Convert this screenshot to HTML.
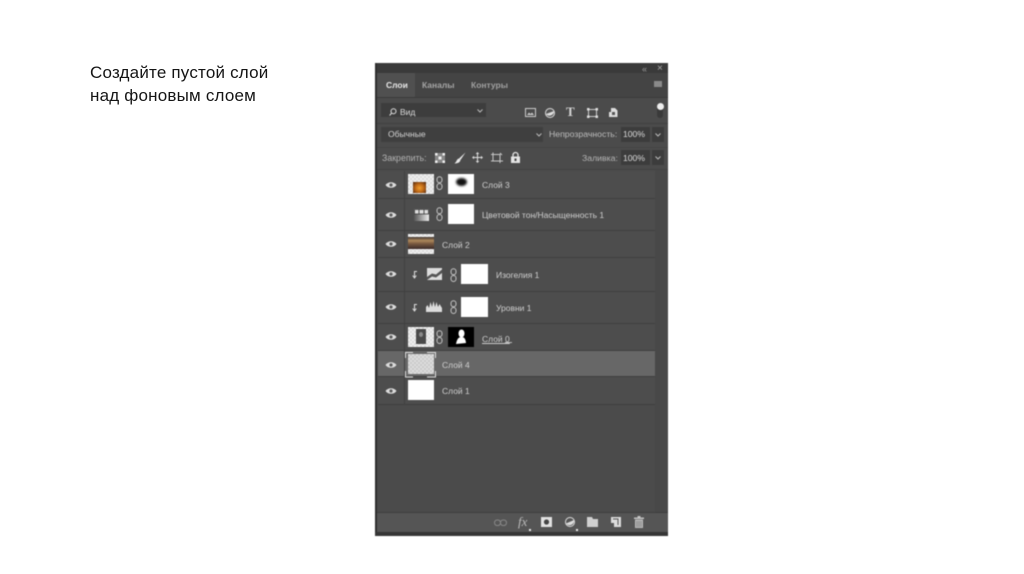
<!DOCTYPE html>
<html><head><meta charset="utf-8">
<style>
html,body{margin:0;padding:0;background:#fff;width:1024px;height:574px;overflow:hidden}
body{position:relative;font-family:"Liberation Sans","Noto Sans CJK SC",sans-serif}
.h{position:absolute;left:90px;font-size:17px;color:#151515;line-height:22px;white-space:nowrap;letter-spacing:.2px;font-family:"Liberation Sans",sans-serif}
#p{position:absolute;left:375px;top:63px;width:293px;height:473px;background:#4b4b4b;overflow:hidden;filter:blur(.45px)}
.a{position:absolute}
.t{position:absolute;white-space:nowrap;font-size:8.5px;color:#cfcfcf;line-height:12px}
.row{position:absolute;left:3px;width:277px;background:#4d4d4d;border-bottom:1px solid #3f3f3f;box-sizing:border-box}
.w{position:absolute;background:#fff}
.c{background-color:#eee;background-image:repeating-conic-gradient(#dcdcdc 0 25%,#f2f2f2 0 50%);background-size:4px 4px}
svg{position:absolute;overflow:visible}
</style></head><body>
<div class="h" style="top:62px">Создайте пустой слой</div>
<div class="h" style="top:85px">над фоновым слоем</div>
<div id="p">
<div class="a" style="left:0;top:0;width:293px;height:10px;background:#3a3a3a"></div>
<div class="a" style="left:0;top:10px;width:293px;height:24px;background:#444"></div>
<div class="a" style="left:0;top:0;width:2px;height:473px;background:#2e2e2e"></div>
<div class="a" style="left:2px;top:10px;width:38px;height:24px;background:#505050"></div>
<div class="t" style="left:11px;top:16px;font-weight:bold;color:#e8e8e8">Слои</div>
<div class="t" style="left:47px;top:16px;font-weight:bold;color:#a5a5a5">Каналы</div>
<div class="t" style="left:96px;top:16px;font-weight:bold;color:#a0a0a0">Контуры</div>
<div class="t" style="left:267px;top:0;color:#999;font-size:9px">«</div>
<div class="t" style="left:282px;top:0;color:#aaa;font-size:10px">×</div>
<div class="a" style="left:279px;top:18px;width:8px;height:6px;background:#8a8a8a"></div>

<div class="a" style="left:2px;top:34px;width:291px;height:1px;background:#3a3a3a"></div>
<div class="a" style="left:6px;top:40px;width:105px;height:14px;background:#3d3d3d"></div>
<svg style="left:14px;top:45px" width="8" height="8"><circle cx="4.5" cy="3.2" r="2.5" fill="none" stroke="#ddd"/><path d="M2.7 5 L.6 7.5" stroke="#ddd"/></svg>
<div class="t" style="left:25px;top:43px;color:#ddd">Вид</div>
<svg style="left:102px;top:46px" width="6" height="4"><path d="M.5 .5L3 3L5.5 .5" fill="none" stroke="#bbb"/></svg>
<svg style="left:150px;top:45px" width="11" height="10"><rect x=".5" y=".5" width="10" height="8" fill="none" stroke="#ccc"/><path d="M2 7L4 4.5L5.5 6L7 4.5L9 7Z" fill="#ccc"/></svg>
<svg style="left:170px;top:45px" width="10" height="10"><circle cx="5" cy="5" r="4.5" fill="#555" stroke="#ddd"/><path d="M1 6A4.5 4.5 0 0 0 9 3Z" fill="#ddd"/></svg>
<div class="t" style="left:191px;top:43px;font-family:'Liberation Serif',serif;font-weight:bold;font-size:13px;color:#d4d4d4">T</div>
<svg style="left:212px;top:45px" width="11" height="10"><rect x="1.5" y="1.5" width="8" height="7" fill="none" stroke="#ccc"/><g fill="#ddd"><rect width="2.5" height="2.5"/><rect x="8.5" width="2.5" height="2.5"/><rect y="7.5" width="2.5" height="2.5"/><rect x="8.5" y="7.5" width="2.5" height="2.5"/></g></svg>
<svg style="left:234px;top:44px" width="9" height="11"><path d="M2 1H6L8.5 3.5V10H0V5H2Z" fill="#ddd"/><rect x="3" y="5" width="3" height="3" fill="#555"/></svg>
<div class="a" style="left:282px;top:42px;width:6px;height:13px;background:#3a3a3a;border-radius:3px"></div>
<div class="a" style="left:282px;top:40px;width:7px;height:7px;background:#eee;border-radius:50%"></div>

<div class="a" style="left:2px;top:60px;width:291px;height:1px;background:#404040"></div>
<div class="a" style="left:6px;top:64px;width:162px;height:15px;background:#3f3f3f"></div>
<div class="t" style="left:13px;top:65px;color:#d4d4d4">Обычные</div>
<svg style="left:161px;top:70px" width="6" height="4"><path d="M.5 .5L3 3L5.5 .5" fill="none" stroke="#bbb"/></svg>
<div class="t" style="left:174px;top:65px;color:#bcbcbc;font-size:8.7px">Непрозрачность:</div>
<div class="a" style="left:246px;top:64px;width:29px;height:15px;background:#3c3c3c"></div>
<div class="t" style="left:248px;top:65px;color:#dcdcdc;font-size:8.6px">100%</div>
<div class="a" style="left:277px;top:64px;width:12px;height:15px;background:#3c3c3c"></div>
<svg style="left:280px;top:70px" width="6" height="4"><path d="M.5 .5L3 3L5.5 .5" fill="none" stroke="#bbb"/></svg>

<div class="a" style="left:2px;top:84px;width:291px;height:1px;background:#444"></div>
<div class="t" style="left:7px;top:89px;color:#b2b2b2;font-size:8.8px">Закрепить:</div>
<svg style="left:60px;top:90px" width="10" height="10"><rect width="10" height="10" fill="#888"/><g fill="#f0f0f0"><rect x="0" y="0" width="2.5" height="2.5"/><rect x="7.5" y="0" width="2.5" height="2.5"/><rect x="3.5" y="3.5" width="3" height="3"/><rect x="0" y="7.5" width="2.5" height="2.5"/><rect x="7.5" y="7.5" width="2.5" height="2.5"/></g></svg>
<svg style="left:79px;top:89px" width="12" height="12"><path d="M11.5 .5L5 6.5L6.5 8Z" fill="#e8e8e8"/><path d="M5 6.5C2.5 7 3 9.5 .5 11.5C3.5 11.5 6 10.5 6.5 8Z" fill="#e8e8e8"/></svg>
<svg style="left:97px;top:89px" width="11" height="11"><path d="M5.5 .5V10.5M.5 5.5H10.5" stroke="#ddd"/><path d="M5.5 0L3.7 2H7.3ZM5.5 11L3.7 9H7.3ZM0 5.5L2 3.7V7.3ZM11 5.5L9 3.7V7.3Z" fill="#ddd"/></svg>
<svg style="left:116px;top:89px" width="12" height="11"><path d="M2 2.5H9V9H2ZM0 2.5H2M2 .5V2.5M0 9H12M9 9V11" fill="none" stroke="#c8c8c8"/><path d="M9 1L11 3" stroke="#c8c8c8"/></svg>
<svg style="left:136px;top:89px" width="9" height="11"><rect y="4.5" width="9" height="6.5" fill="#e4e4e4"/><path d="M2 5V3A2.5 2.5 0 0 1 7 3V5" fill="none" stroke="#e4e4e4" stroke-width="1.3"/><rect x="3.5" y="6.5" width="2" height="2.5" fill="#444"/></svg>
<div class="t" style="left:207px;top:89px;color:#b5b5b5;font-size:8.7px">Заливка:</div>
<div class="a" style="left:246px;top:87px;width:29px;height:15px;background:#3c3c3c"></div>
<div class="t" style="left:248px;top:89px;color:#dcdcdc;font-size:8.6px">100%</div>
<div class="a" style="left:277px;top:87px;width:12px;height:15px;background:#3c3c3c"></div>
<svg style="left:280px;top:93px" width="6" height="4"><path d="M.5 .5L3 3L5.5 .5" fill="none" stroke="#bbb"/></svg>
<div class="a" style="left:2px;top:106px;width:291px;height:1px;background:#434343"></div>

<div class="a" style="left:280px;top:107px;width:13px;height:342px;background:#484848"></div>

<div class="row" style="top:108px;height:28px"></div>
<div class="row" style="top:136px;height:32px"></div>
<div class="row" style="top:168px;height:27px"></div>
<div class="row" style="top:195px;height:34px"></div>
<div class="row" style="top:229px;height:32px"></div>
<div class="row" style="top:261px;height:27px"></div>
<div class="row" style="top:288px;height:26px;background:#676767"></div>
<div class="row" style="top:314px;height:28px"></div>
<div class="a" style="left:29px;top:108px;width:1px;height:234px;background:#414141"></div>

<svg style="left:10px;top:118px" width="12" height="8"><path d="M.5 4C3 .3 9 .3 11.5 4C9 7.7 3 7.7 .5 4Z" fill="#dcdcdc"/><circle cx="6" cy="4" r="1.6" fill="#5a5a5a"/></svg>
<svg style="left:10px;top:148px" width="12" height="8"><path d="M.5 4C3 .3 9 .3 11.5 4C9 7.7 3 7.7 .5 4Z" fill="#dcdcdc"/><circle cx="6" cy="4" r="1.6" fill="#5a5a5a"/></svg>
<svg style="left:10px;top:177px" width="12" height="8"><path d="M.5 4C3 .3 9 .3 11.5 4C9 7.7 3 7.7 .5 4Z" fill="#dcdcdc"/><circle cx="6" cy="4" r="1.6" fill="#5a5a5a"/></svg>
<svg style="left:10px;top:207px" width="12" height="8"><path d="M.5 4C3 .3 9 .3 11.5 4C9 7.7 3 7.7 .5 4Z" fill="#dcdcdc"/><circle cx="6" cy="4" r="1.6" fill="#5a5a5a"/></svg>
<svg style="left:10px;top:240px" width="12" height="8"><path d="M.5 4C3 .3 9 .3 11.5 4C9 7.7 3 7.7 .5 4Z" fill="#dcdcdc"/><circle cx="6" cy="4" r="1.6" fill="#5a5a5a"/></svg>
<svg style="left:10px;top:270px" width="12" height="8"><path d="M.5 4C3 .3 9 .3 11.5 4C9 7.7 3 7.7 .5 4Z" fill="#dcdcdc"/><circle cx="6" cy="4" r="1.6" fill="#5a5a5a"/></svg>
<svg style="left:10px;top:298px" width="12" height="8"><path d="M.5 4C3 .3 9 .3 11.5 4C9 7.7 3 7.7 .5 4Z" fill="#dcdcdc"/><circle cx="6" cy="4" r="1.6" fill="#5a5a5a"/></svg>
<svg style="left:10px;top:324px" width="12" height="8"><path d="M.5 4C3 .3 9 .3 11.5 4C9 7.7 3 7.7 .5 4Z" fill="#dcdcdc"/><circle cx="6" cy="4" r="1.6" fill="#5a5a5a"/></svg>

<!-- row 1 -->
<div class="a c" style="left:33px;top:111px;width:26px;height:20px"></div>
<div class="a" style="left:38px;top:119px;width:13px;height:11px;background:radial-gradient(ellipse at 50% 55%,#f0a030 0,#c06a18 45%,#4a2410 100%)"></div>
<svg style="left:61px;top:113px" width="8" height="15"><rect x="1" y=".7" width="5" height="6" rx="2.5" fill="none" stroke="#c4c4c4"/><rect x="1" y="7.5" width="5" height="6" rx="2.5" fill="none" stroke="#c4c4c4"/></svg>
<div class="w" style="left:73px;top:111px;width:26px;height:20px"></div>
<div class="a" style="left:81px;top:115px;width:11px;height:8px;background:#111;border-radius:50%;filter:blur(1px)"></div>
<div class="t" style="left:107px;top:116px">Слой 3</div>
<!-- row 2 -->
<svg style="left:39px;top:146px" width="15" height="12"><defs><linearGradient id="g" x1="0" x2="1"><stop offset="0" stop-color="#555"/><stop offset="1" stop-color="#eee"/></linearGradient></defs><rect width="15" height="5" fill="#ddd"/><rect y="5" width="15" height="7" fill="url(#g)"/><path d="M.5 .5H5V5H.5ZM5 .5H10V5H5ZM10 .5H14.5V5H10Z" fill="none" stroke="#333" stroke-width=".8"/></svg>
<svg style="left:61px;top:144px" width="8" height="15"><rect x="1" y=".7" width="5" height="6" rx="2.5" fill="none" stroke="#c4c4c4"/><rect x="1" y="7.5" width="5" height="6" rx="2.5" fill="none" stroke="#c4c4c4"/></svg>
<div class="w" style="left:73px;top:141px;width:26px;height:20px"></div>
<div class="t" style="left:107px;top:146px">Цветовой тон/Насыщенность 1</div>
<!-- row 3 -->
<div class="a c" style="left:33px;top:171px;width:26px;height:20px"></div>
<div class="a" style="left:33px;top:174px;width:26px;height:12px;background:linear-gradient(#3d3330,#b08a5c 30%,#7a5a40 55%,#3a2a28)"></div>
<div class="t" style="left:67px;top:176px">Слой 2</div>
<!-- row 4 -->
<svg style="left:37px;top:207px" width="6" height="9"><path d="M5 1.5H2.5V7M.7 5.5L2.5 8L4.3 5.5" fill="none" stroke="#ddd"/></svg>
<svg style="left:52px;top:205px" width="15" height="12"><rect width="15" height="12" fill="#ddd"/><path d="M0 9L5 5.5L9 6.5L15 1.5V5L9 9.5L5 8.5L0 12Z" fill="#555"/></svg>
<svg style="left:75px;top:205px" width="8" height="15"><rect x="1" y=".7" width="5" height="6" rx="2.5" fill="none" stroke="#c4c4c4"/><rect x="1" y="7.5" width="5" height="6" rx="2.5" fill="none" stroke="#c4c4c4"/></svg>
<div class="w" style="left:86px;top:201px;width:27px;height:20px"></div>
<div class="t" style="left:121px;top:206px">Изогелия 1</div>
<!-- row 5 -->
<svg style="left:37px;top:240px" width="6" height="9"><path d="M5 1.5H2.5V7M.7 5.5L2.5 8L4.3 5.5" fill="none" stroke="#ddd"/></svg>
<svg style="left:51px;top:238px" width="16" height="11"><path d="M0 11V6L1.5 4L3 7L4.5 1L6 6L7.5 0L9 6L10.5 1L12 6L13.5 3L16 7V11Z" fill="#ddd"/></svg>
<svg style="left:75px;top:237px" width="8" height="15"><rect x="1" y=".7" width="5" height="6" rx="2.5" fill="none" stroke="#c4c4c4"/><rect x="1" y="7.5" width="5" height="6" rx="2.5" fill="none" stroke="#c4c4c4"/></svg>
<div class="w" style="left:86px;top:234px;width:27px;height:20px"></div>
<div class="t" style="left:121px;top:239px">Уровни 1</div>
<!-- row 6 -->
<div class="a c" style="left:33px;top:264px;width:26px;height:20px"></div>
<div class="a" style="left:41px;top:266px;width:10px;height:15px;background:#4a4a4a"></div>
<div class="a" style="left:44px;top:269px;width:4px;height:5px;background:#8a8a8a;border-radius:50%"></div>
<svg style="left:61px;top:267px" width="8" height="15"><rect x="1" y=".7" width="5" height="6" rx="2.5" fill="none" stroke="#c4c4c4"/><rect x="1" y="7.5" width="5" height="6" rx="2.5" fill="none" stroke="#c4c4c4"/></svg>
<div class="a" style="left:73px;top:264px;width:26px;height:20px;background:#000"></div>
<svg style="left:80px;top:266px" width="12" height="16"><ellipse cx="6.5" cy="4.5" rx="3" ry="4" fill="#fff"/><path d="M1 15C2 10 3.5 8 6.5 8C9.5 8 10.5 10 11 14Z" fill="#fff"/></svg>
<div class="t" style="left:107px;top:270px;text-decoration:underline">Слой 0 </div>
<div class="a" style="left:130px;top:279px;width:7px;height:1px;background:#bbb"></div>
<!-- row 7 -->
<div class="a c" style="left:33px;top:291px;width:26px;height:20px;opacity:.85"></div>
<svg style="left:30px;top:288.5px" width="32" height="26"><path d="M.5 6V.5H8M22 .5H30.5V6M30.5 19V25H22M8 25H.5V19" fill="none" stroke="#e0e0e0"/></svg>
<div class="t" style="left:67px;top:296px">Слой 4</div>
<!-- row 8 -->
<div class="w" style="left:33px;top:317px;width:26px;height:20px"></div>
<div class="t" style="left:67px;top:322px">Слой 1</div>

<!-- footer -->
<div class="a" style="left:2px;top:449px;width:291px;height:1px;background:#3e3e3e"></div>
<div class="a" style="left:2px;top:450px;width:291px;height:19px;background:#555"></div>
<div class="a" style="left:0;top:469px;width:293px;height:4px;background:#363636"></div>
<svg style="left:119px;top:456px" width="13" height="8"><rect x=".5" y="1" width="6" height="5.5" rx="2.7" fill="none" stroke="#888"/><rect x="6.5" y="1" width="6" height="5.5" rx="2.7" fill="none" stroke="#888"/></svg>
<div class="t" style="left:143px;top:453px;font-family:'Liberation Serif',serif;font-style:italic;font-size:13px;color:#bbb">fx</div>
<div class="a" style="left:154px;top:466px;width:2px;height:2px;background:#eee"></div>
<svg style="left:166px;top:454px" width="11" height="10"><rect width="11" height="10" fill="#e2e2e2"/><circle cx="5.5" cy="5" r="2.6" fill="#444"/></svg>
<svg style="left:190px;top:454px" width="10" height="10"><circle cx="5" cy="5" r="4.5" fill="#555" stroke="#ddd"/><path d="M1 6.5A4.5 4.5 0 0 0 9 3Z" fill="#ddd"/></svg>
<div class="a" style="left:201px;top:466px;width:2px;height:2px;background:#eee"></div>
<svg style="left:212px;top:454px" width="11" height="10"><path d="M0 0H5L6 2H11V10H0Z" fill="#d0d0d0"/></svg>
<svg style="left:236px;top:454px" width="10" height="10"><path d="M0 0H10V10H3V6H0Z" fill="#dcdcdc"/><path d="M2 2H7V8" fill="none" stroke="#555"/></svg>
<svg style="left:259px;top:453px" width="10" height="12"><rect x="3.5" width="3" height="1.5" fill="#c4c4c4"/><rect y="1.5" width="10" height="1.5" fill="#c4c4c4"/><rect x="1" y="3.5" width="8" height="8.5" fill="#b8b8b8"/><path d="M3 5V11M5 5V11M7 5V11" stroke="#666" stroke-width=".6"/></svg>
</div>
</body></html>
